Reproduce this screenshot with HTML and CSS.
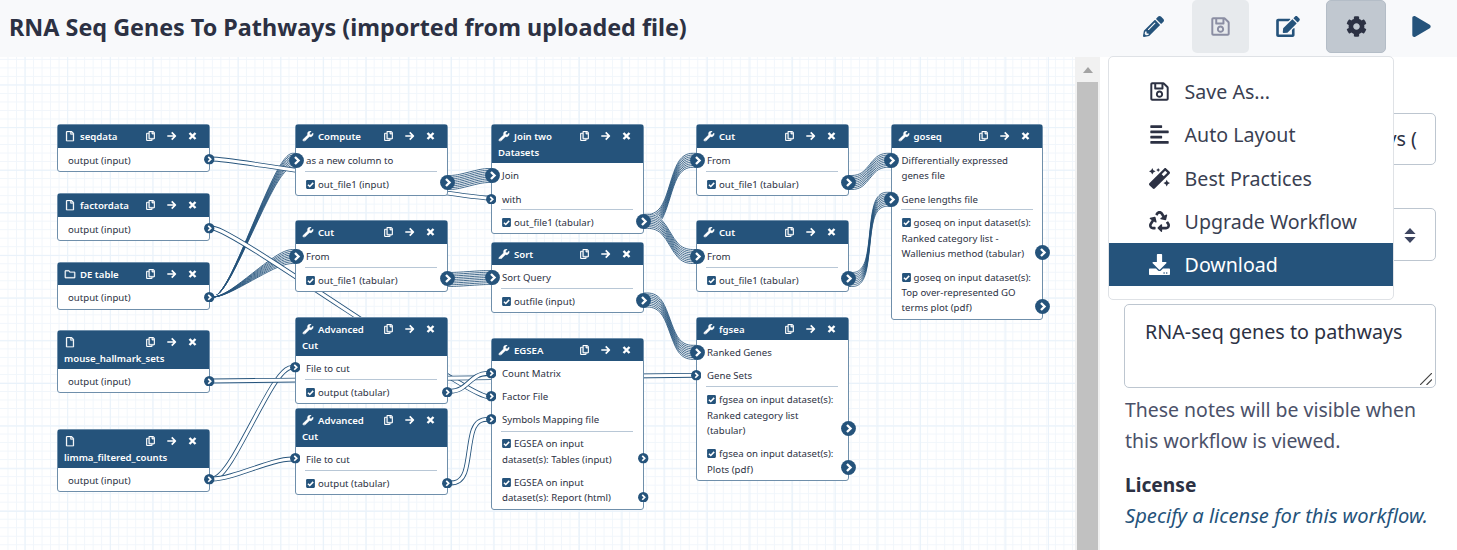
FILE: index.html
```html
<!DOCTYPE html>
<html lang="en">
<head>
<meta charset="utf-8">
<title>Workflow Editor</title>
<link rel="stylesheet" href="styles.css">
</head>
<body>
<svg class="sprite" aria-hidden="true">
  <symbol id="pencil" viewBox="0 0 512 512"><path d="M497.9 142.1l-46.1 46.1c-4.7 4.7-12.3 4.7-17 0l-111-111c-4.7-4.7-4.7-12.3 0-17l46.1-46.1c18.7-18.7 49.1-18.7 67.9 0l60.1 60.1c18.8 18.7 18.8 49.1 0 67.9zM284.2 99.8L21.6 362.4.4 483.9c-2.9 16.4 11.4 30.6 27.8 27.8l121.5-21.3 262.6-262.6c4.7-4.7 4.7-12.3 0-17l-111-111c-4.8-4.7-12.4-4.7-17.1 0zM124.1 339.9c-5.5-5.5-5.5-14.3 0-19.8l154-154c5.5-5.5 14.3-5.5 19.8 0s5.5 14.3 0 19.8l-154 154c-5.5 5.5-14.3 5.5-19.8 0zM88 424h48v36.3l-64.5 11.3-31.1-31.1L51.7 376H88v48z"/></symbol>
  <symbol id="save" viewBox="0 0 448 512"><path d="M433.941 129.941l-83.882-83.882A48 48 0 0 0 316.118 32H48C21.49 32 0 53.49 0 80v352c0 26.51 21.49 48 48 48h352c26.51 0 48-21.49 48-48V163.882a48 48 0 0 0-14.059-33.941zM272 80v80H144V80h128zm122 352H54a6 6 0 0 1-6-6V86a6 6 0 0 1 6-6h42v104c0 13.255 10.745 24 24 24h176c13.255 0 24-10.745 24-24V83.882l78.243 78.243a6 6 0 0 1 1.757 4.243V426a6 6 0 0 1-6 6zM224 232c-48.523 0-88 39.477-88 88s39.477 88 88 88 88-39.477 88-88-39.477-88-88-88zm0 128c-22.056 0-40-17.944-40-40s17.944-40 40-40 40 17.944 40 40-17.944 40-40 40z"/></symbol>
  <symbol id="edit" viewBox="0 0 576 512"><path d="M402.6 83.2l90.2 90.2c3.8 3.8 3.8 10 0 13.8L274.4 405.6l-92.8 10.3c-12.4 1.4-22.9-9.1-21.5-21.5l10.3-92.8L388.8 83.2c3.8-3.8 10-3.8 13.8 0zm162-22.9l-48.8-48.8c-15.2-15.2-39.9-15.2-55.2 0l-35.4 35.4c-3.8 3.8-3.8 10 0 13.8l90.2 90.2c3.8 3.8 10 3.8 13.8 0l35.4-35.4c15.2-15.3 15.2-40 0-55.2zM384 346.2V448H64V128h229.8c3.2 0 6.2-1.3 8.5-3.5l40-40c7.6-7.6 2.2-20.5-8.5-20.5H48C21.5 64 0 85.5 0 112v352c0 26.5 21.5 48 48 48h352c26.5 0 48-21.5 48-48V306.2c0-10.7-12.9-16-20.5-8.5l-40 40c-2.2 2.3-3.5 5.3-3.5 8.5z"/></symbol>
  <symbol id="cog" viewBox="0 0 512 512"><path d="M487.4 315.7l-42.6-24.6c4.3-23.2 4.3-47 0-70.2l42.6-24.6c4.9-2.8 7.1-8.6 5.5-14-11.1-35.6-30-67.8-54.7-94.6-3.8-4.1-10-5.1-14.8-2.3L380.8 110c-17.9-15.4-38.5-27.3-60.8-35.1V25.8c0-5.6-3.9-10.5-9.4-11.7-36.7-8.2-74.3-7.8-109.2 0-5.5 1.2-9.4 6.1-9.4 11.7V75c-22.2 7.9-42.8 19.8-60.8 35.1L88.7 85.5c-4.9-2.8-11-1.9-14.8 2.3-24.7 26.7-43.6 58.9-54.7 94.6-1.7 5.4.6 11.2 5.5 14L67.3 221c-4.3 23.2-4.3 47 0 70.2l-42.6 24.6c-4.9 2.8-7.1 8.6-5.5 14 11.1 35.6 30 67.8 54.7 94.6 3.8 4.1 10 5.1 14.8 2.3l42.6-24.6c17.9 15.4 38.5 27.3 60.8 35.1v49.2c0 5.6 3.9 10.5 9.4 11.7 36.7 8.2 74.3 7.8 109.2 0 5.5-1.2 9.4-6.1 9.4-11.7v-49.2c22.2-7.9 42.8-19.8 60.8-35.1l42.6 24.6c4.9 2.8 11 1.9 14.8-2.3 24.7-26.7 43.6-58.9 54.7-94.6 1.5-5.5-.7-11.3-5.6-14.1zM256 336c-44.1 0-80-35.9-80-80s35.9-80 80-80 80 35.9 80 80-35.9 80-80 80z"/></symbol>
  <symbol id="play" viewBox="0 0 448 512"><path d="M424.4 214.7L72.4 6.6C43.8-10.3 0 6.1 0 47.9V464c0 37.5 40.7 60.1 72.4 41.3l352-208c31.4-18.5 31.5-64.1 0-82.6z"/></symbol>
  <symbol id="align" viewBox="0 0 448 512"><path d="M12 32h264a12 12 0 0 1 12 12v40a12 12 0 0 1-12 12H12A12 12 0 0 1 0 84V44a12 12 0 0 1 12-12zM12 160h424a12 12 0 0 1 12 12v40a12 12 0 0 1-12 12H12a12 12 0 0 1-12-12v-40a12 12 0 0 1 12-12zM12 288h264a12 12 0 0 1 12 12v40a12 12 0 0 1-12 12H12a12 12 0 0 1-12-12v-40a12 12 0 0 1 12-12zM12 416h424a12 12 0 0 1 12 12v40a12 12 0 0 1-12 12H12a12 12 0 0 1-12-12v-40a12 12 0 0 1 12-12z"/></symbol>
  <symbol id="magic" viewBox="0 0 512 512"><path d="M224 96l16-32 32-16-32-16-16-32-16 32-32 16 32 16 16 32zM80 160l26.66-53.33L160 80l-53.34-26.67L80 0 53.34 53.33 0 80l53.34 26.67L80 160zm352 128l-26.66 53.33L352 368l53.34 26.67L432 448l26.66-53.33L512 368l-53.34-26.67L432 288zm70.62-193.77L417.77 9.38C411.53 3.12 403.34 0 395.15 0c-8.19 0-16.38 3.12-22.63 9.38L9.38 372.52c-12.5 12.5-12.5 32.76 0 45.25l84.85 84.85c6.25 6.25 14.44 9.37 22.62 9.37 8.19 0 16.38-3.12 22.63-9.37l363.14-363.15c12.5-12.48 12.5-32.75 0-45.24zM359.45 203.46l-50.91-50.91 86.6-86.6 50.91 50.91-86.6 86.6z"/></symbol>
  <symbol id="recycle" viewBox="0 0 512 512"><path d="M184.561 261.903c3.232 13.997-12.123 24.635-24.068 17.168l-40.736-25.455-50.867 81.402C55.606 356.273 70.96 384 96.012 384H148c6.627 0 12 5.373 12 12v40c0 6.627-5.373 12-12 12H96.115c-75.334 0-121.302-83.048-81.408-146.88l50.822-81.388-40.725-25.448c-12.081-7.547-8.966-25.961 4.879-29.158l110.237-25.45c8.611-1.988 17.201 3.381 19.189 11.99l25.452 110.237zm98.561-182.915l41.289 66.076-40.74 25.457c-12.051 7.528-9 25.953 4.879 29.158l110.237 25.45c8.672 1.999 17.215-3.438 19.189-11.99l25.45-110.237c3.197-13.844-11.99-24.719-24.068-17.168l-40.687 25.424-41.263-66.082c-37.521-60.033-125.209-60.171-162.816 0l-17.963 28.766c-3.51 5.62-1.8 13.021 3.82 16.533l33.919 21.195c5.62 3.512 13.024 1.803 16.536-3.817l17.961-28.743c12.712-20.341 41.973-19.676 54.257-.022zM497.288 301.12l-27.515-44.065c-3.511-5.623-10.916-7.334-16.538-3.821l-33.861 21.159c-5.62 3.512-7.33 10.915-3.818 16.536l27.564 44.112c13.257 21.211-2.057 48.96-27.136 48.96H320V336.02c0-14.213-17.242-21.383-27.313-11.313l-80 79.981c-6.249 6.248-6.249 16.379 0 22.627l80 79.989C302.689 517.308 320 510.3 320 495.989V448h95.88c75.274 0 121.335-82.997 81.408-146.88z"/></symbol>
  <symbol id="download" viewBox="0 0 512 512"><path d="M216 0h80c13.3 0 24 10.7 24 24v168h87.7c17.8 0 26.7 21.5 14.1 34.1L269.7 378.3c-7.5 7.5-19.8 7.5-27.3 0L90.1 226.1c-12.6-12.6-3.7-34.1 14.1-34.1H192V24c0-13.3 10.7-24 24-24zm296 376v112c0 13.3-10.7 24-24 24H24c-13.3 0-24-10.7-24-24V376c0-13.3 10.7-24 24-24h146.7l49 49c20.1 20.1 52.5 20.1 72.6 0l49-49H488c13.3 0 24 10.7 24 24zm-124 88c0-11-9-20-20-20s-20 9-20 20 9 20 20 20 20-9 20-20zm64 0c0-11-9-20-20-20s-20 9-20 20 9 20 20 20 20-9 20-20z"/></symbol>
  <symbol id="wrench" viewBox="0 0 512 512"><path d="M507.73 109.1c-2.24-9.03-13.54-12.09-20.12-5.51l-74.36 74.36-67.88-11.31-11.31-67.88 74.36-74.36c6.62-6.62 3.43-17.9-5.66-20.16-47.38-11.74-99.55.91-136.58 37.93-39.64 39.64-50.55 97.1-34.05 147.2L18.74 402.76c-24.99 24.99-24.99 65.51 0 90.5 24.99 24.99 65.51 24.99 90.5 0l213.21-213.21c50.12 16.71 107.47 5.68 147.37-34.22 37.07-37.07 49.7-89.32 37.91-136.73zM64 472c-13.25 0-24-10.75-24-24 0-13.26 10.75-24 24-24s24 10.74 24 24c0 13.25-10.75 24-24 24z"/></symbol>
  <symbol id="file" viewBox="0 0 384 512"><path d="M369.9 97.9L286 14C277 5 264.8-.1 252.1-.1H48C21.5 0 0 21.5 0 48v416c0 26.5 21.5 48 48 48h288c26.5 0 48-21.5 48-48V131.9c0-12.7-5.1-25-14.1-34zM332.1 128H256V51.9l76.1 76.1zM48 464V48h160v104c0 13.3 10.7 24 24 24h104v288H48z"/></symbol>
  <symbol id="folder" viewBox="0 0 512 512"><path d="M464 128H272l-54.63-54.63c-6-6-14.14-9.37-22.63-9.37H48C21.49 64 0 85.49 0 112v288c0 26.51 21.49 48 48 48h416c26.51 0 48-21.49 48-48V176c0-26.51-21.49-48-48-48zm0 272H48V112h140.12l54.63 54.63c6 6 14.14 9.37 22.63 9.37H464v224z"/></symbol>
  <symbol id="copy" viewBox="0 0 448 512"><path d="M433.941 65.941l-51.882-51.882A48 48 0 0 0 348.118 0H176c-26.51 0-48 21.49-48 48v48H48c-26.51 0-48 21.49-48 48v320c0 26.51 21.49 48 48 48h224c26.51 0 48-21.49 48-48v-48h80c26.51 0 48-21.49 48-48V99.882a48 48 0 0 0-14.059-33.941zM266 464H54a6 6 0 0 1-6-6V150a6 6 0 0 1 6-6h74v224c0 26.51 21.49 48 48 48h96v42a6 6 0 0 1-6 6zm128-96H182a6 6 0 0 1-6-6V54a6 6 0 0 1 6-6h106v88c0 13.255 10.745 24 24 24h88v202a6 6 0 0 1-6 6zm6-256h-64V48h9.632c1.591 0 3.117.632 4.243 1.757l48.368 48.368a6 6 0 0 1 1.757 4.243V112z"/></symbol>
  <symbol id="arrow" viewBox="0 0 10 10"><path class="line" d="M.8 5h7.6M5.2 1.4 8.8 5 5.2 8.6"/></symbol>
  <symbol id="close" viewBox="0 0 10 10"><path class="line thick" d="M2 2l6 6M8 2 2 8"/></symbol>
  <symbol id="check" viewBox="0 0 10 10"><rect class="blue" x=".1" y=".1" width="9.8" height="9.8" rx="1.2"/><path class="line" d="M2.2 5.2 4.2 7.2 8 3.2"/></symbol>
  <symbol id="port" viewBox="0 0 16 16"><circle class="blue" cx="8" cy="8" r="7.9"/><path class="line chevron" d="M6.4 4.3 10.2 8l-3.8 3.7"/></symbol>
  <symbol id="tools" viewBox="0 0 56 12">
    <use href="#copy" x="2" y="1" width="9" height="10" stroke="#fff" stroke-width="16"/>
    <use href="#arrow" x="22.5" y="1" width="10" height="10"/>
    <use href="#close" x="43.5" y="1" width="10" height="10"/>
  </symbol>
</svg>

<header class="topbar">
  <h1 class="title">RNA Seq Genes To Pathways (imported from uploaded file)</h1>
  <nav class="actions">
    <span class="action"><svg class="ico"><use href="#pencil"/></svg></span>
    <span class="action disabled"><svg class="ico"><use href="#save"/></svg></span>
    <span class="action"><svg class="ico wide"><use href="#edit"/></svg></span>
    <span class="action pressed"><svg class="ico"><use href="#cog"/></svg></span>
    <span class="action run"><svg class="ico"><use href="#play"/></svg></span>
  </nav>
</header>

<main class="editor">
  <section class="canvas">
    <svg class="wires" id="wires" viewBox="0 57 1075 493"></svg>

    <article class="node" style="left:57px;top:67.3px">
      <h2 class="head"><svg class="tools"><use href="#tools"/></svg><svg class="kind"><use href="#file"/></svg>seqdata</h2>
      <div class="body data"><p class="row out small">output (input)<svg class="port"><use href="#port"/></svg></p></div>
    </article>
    <article class="node" style="left:57px;top:136.3px">
      <h2 class="head"><svg class="tools"><use href="#tools"/></svg><svg class="kind"><use href="#file"/></svg>factordata</h2>
      <div class="body data"><p class="row out small">output (input)<svg class="port"><use href="#port"/></svg></p></div>
    </article>
    <article class="node" style="left:57px;top:205px">
      <h2 class="head"><svg class="tools"><use href="#tools"/></svg><svg class="kind"><use href="#folder"/></svg>DE table</h2>
      <div class="body data"><p class="row out small">output (input)<svg class="port"><use href="#port"/></svg></p></div>
    </article>
    <article class="node" style="left:57px;top:273.3px">
      <h2 class="head"><svg class="tools"><use href="#tools"/></svg><svg class="kind"><use href="#file"/></svg><br>mouse_hallmark_sets</h2>
      <div class="body data"><p class="row out small">output (input)<svg class="port"><use href="#port"/></svg></p></div>
    </article>
    <article class="node" style="left:57px;top:372px">
      <h2 class="head"><svg class="tools"><use href="#tools"/></svg><svg class="kind"><use href="#file"/></svg><br>limma_filtered_counts</h2>
      <div class="body data"><p class="row out small">output (input)<svg class="port"><use href="#port"/></svg></p></div>
    </article>

    <article class="node" style="left:295px;top:67.3px">
      <h2 class="head"><svg class="tools"><use href="#tools"/></svg><svg class="kind"><use href="#wrench"/></svg>Compute</h2>
      <div class="body"><p class="row in">as a new column to<svg class="port"><use href="#port"/></svg></p><hr class="rule">
      <p class="row out"><svg class="check"><use href="#check"/></svg>out_file1 (input)<svg class="port"><use href="#port"/></svg></p></div>
    </article>
    <article class="node" style="left:295px;top:163.3px">
      <h2 class="head"><svg class="tools"><use href="#tools"/></svg><svg class="kind"><use href="#wrench"/></svg>Cut</h2>
      <div class="body"><p class="row in">From<svg class="port"><use href="#port"/></svg></p><hr class="rule">
      <p class="row out"><svg class="check"><use href="#check"/></svg>out_file1 (tabular)<svg class="port"><use href="#port"/></svg></p></div>
    </article>
    <article class="node" style="left:295px;top:260px">
      <h2 class="head"><svg class="tools"><use href="#tools"/></svg><svg class="kind"><use href="#wrench"/></svg>Advanced<br>Cut</h2>
      <div class="body"><p class="row in small">File to cut<svg class="port"><use href="#port"/></svg></p><hr class="rule">
      <p class="row out small"><svg class="check"><use href="#check"/></svg>output (tabular)<svg class="port"><use href="#port"/></svg></p></div>
    </article>
    <article class="node" style="left:295px;top:351px">
      <h2 class="head"><svg class="tools"><use href="#tools"/></svg><svg class="kind"><use href="#wrench"/></svg>Advanced<br>Cut</h2>
      <div class="body"><p class="row in small">File to cut<svg class="port"><use href="#port"/></svg></p><hr class="rule">
      <p class="row out small"><svg class="check"><use href="#check"/></svg>output (tabular)<svg class="port"><use href="#port"/></svg></p></div>
    </article>

    <article class="node" style="left:491px;top:67.3px">
      <h2 class="head"><svg class="tools"><use href="#tools"/></svg><svg class="kind"><use href="#wrench"/></svg>Join two<br>Datasets</h2>
      <div class="body"><p class="row in">Join<svg class="port"><use href="#port"/></svg></p><p class="row in small lag">with<svg class="port"><use href="#port"/></svg></p><hr class="rule">
      <p class="row out"><svg class="check"><use href="#check"/></svg>out_file1 (tabular)<svg class="port"><use href="#port"/></svg></p></div>
    </article>
    <article class="node" style="left:491px;top:184.7px">
      <h2 class="head"><svg class="tools"><use href="#tools"/></svg><svg class="kind"><use href="#wrench"/></svg>Sort</h2>
      <div class="body"><p class="row in">Sort Query<svg class="port"><use href="#port"/></svg></p><hr class="rule">
      <p class="row out"><svg class="check"><use href="#check"/></svg>outfile (input)<svg class="port"><use href="#port"/></svg></p></div>
    </article>
    <article class="node" style="left:491px;top:281px">
      <h2 class="head"><svg class="tools"><use href="#tools"/></svg><svg class="kind"><use href="#wrench"/></svg>EGSEA</h2>
      <div class="body tight"><p class="row in small">Count Matrix<svg class="port"><use href="#port"/></svg></p><p class="row in small">Factor File<svg class="port"><use href="#port"/></svg></p><p class="row in small">Symbols Mapping file<svg class="port"><use href="#port"/></svg></p><hr class="rule">
      <p class="row out small"><svg class="check"><use href="#check"/></svg>EGSEA on input<br>dataset(s): Tables (input)<svg class="port"><use href="#port"/></svg></p>
      <p class="row out small"><svg class="check"><use href="#check"/></svg>EGSEA on input<br>dataset(s): Report (html)<svg class="port"><use href="#port"/></svg></p></div>
    </article>

    <article class="node" style="left:696px;top:67.3px">
      <h2 class="head"><svg class="tools"><use href="#tools"/></svg><svg class="kind"><use href="#wrench"/></svg>Cut</h2>
      <div class="body"><p class="row in">From<svg class="port"><use href="#port"/></svg></p><hr class="rule">
      <p class="row out"><svg class="check"><use href="#check"/></svg>out_file1 (tabular)<svg class="port"><use href="#port"/></svg></p></div>
    </article>
    <article class="node" style="left:696px;top:163.3px">
      <h2 class="head"><svg class="tools"><use href="#tools"/></svg><svg class="kind"><use href="#wrench"/></svg>Cut</h2>
      <div class="body"><p class="row in">From<svg class="port"><use href="#port"/></svg></p><hr class="rule">
      <p class="row out"><svg class="check"><use href="#check"/></svg>out_file1 (tabular)<svg class="port"><use href="#port"/></svg></p></div>
    </article>
    <article class="node" style="left:696px;top:260px">
      <h2 class="head"><svg class="tools"><use href="#tools"/></svg><svg class="kind"><use href="#wrench"/></svg>fgsea</h2>
      <div class="body tight"><p class="row in">Ranked Genes<svg class="port"><use href="#port"/></svg></p><p class="row in small">Gene Sets<svg class="port"><use href="#port"/></svg></p><hr class="rule">
      <p class="row out"><svg class="check"><use href="#check"/></svg>fgsea on input dataset(s):<br>Ranked category list<br>(tabular)<svg class="port"><use href="#port"/></svg></p>
      <p class="row out"><svg class="check"><use href="#check"/></svg>fgsea on input dataset(s):<br>Plots (pdf)<svg class="port"><use href="#port"/></svg></p></div>
    </article>

    <article class="node" style="left:890.5px;top:67.3px">
      <h2 class="head"><svg class="tools"><use href="#tools"/></svg><svg class="kind"><use href="#wrench"/></svg>goseq</h2>
      <div class="body"><p class="row in first">Differentially expressed<br>genes file<svg class="port"><use href="#port"/></svg></p><p class="row in lag">Gene lengths file<svg class="port"><use href="#port"/></svg></p><hr class="rule">
      <p class="row out"><svg class="check"><use href="#check"/></svg>goseq on input dataset(s):<br>Ranked category list -<br>Wallenius method (tabular)<svg class="port"><use href="#port"/></svg></p>
      <p class="row out"><svg class="check"><use href="#check"/></svg>goseq on input dataset(s):<br>Top over-represented GO<br>terms plot (pdf)<svg class="port"><use href="#port"/></svg></p></div>
    </article>
  </section>

  <div class="scrollbar"><span class="scroll-up"></span><span class="thumb"></span></div>

  <aside class="panel">
    <div class="field name">ys (</div>
    <div class="field select"><svg class="sorter" viewBox="0 0 12 15"><path d="M6 0l5.6 6H.4zM6 15l5.6-6H.4z"/></svg></div>
    <div class="field notes">RNA-seq genes to pathways<svg class="grip" viewBox="0 0 12 12"><path d="M0 12 12 0M6.5 12 12 6.5"/></svg></div>
    <p class="help">These notes will be visible when<br>this workflow is viewed.</p>
    <h3 class="label">License</h3>
    <a class="license">Specify a license for this workflow.</a>
  </aside>
</main>

<ul class="menu">
  <li class="item"><svg class="ico"><use href="#save"/></svg><span>Save As...</span></li>
  <li class="item"><svg class="ico"><use href="#align"/></svg><span>Auto Layout</span></li>
  <li class="item"><svg class="ico"><use href="#magic"/></svg><span>Best Practices</span></li>
  <li class="item"><svg class="ico"><use href="#recycle"/></svg><span>Upgrade Workflow</span></li>
  <li class="item active"><svg class="ico"><use href="#download"/></svg><span>Download</span></li>
</ul>
<script src="wires.js"></script>
</body>
</html>
```
FILE: styles.css
```css
* { box-sizing: border-box; }
body {
  margin: 0;
  width: 1457px;
  height: 550px;
  overflow: hidden;
  position: relative;
  background: #fff;
  color: #2c3143;
  font-family: "Noto Sans", sans-serif;
}
h1, h2, h3, p, ul { margin: 0; padding: 0; }
.sprite { position: absolute; width: 0; height: 0; }
.line { fill: none; stroke: #fff; stroke-width: 1.7; }
.thick { stroke-width: 2.4; }
.chevron { stroke-width: 2.5; }
.blue { fill: #25537b; }

.topbar {
  display: flex;
  justify-content: space-between;
  height: 57px;
  padding-left: 9px;
  background: #f8f9fb;
}
.title {
  font-size: 23.35px;
  line-height: 55px;
  font-weight: 700;
  white-space: nowrap;
}
.actions { display: flex; gap: 10px; padding-right: 10px; }
.action {
  display: flex;
  align-items: center;
  justify-content: center;
  width: 57px;
  height: 53px;
  border-radius: 5px;
  color: #25537b;
}
.disabled { background: #e7eaed; color: #8b8ea3; }
.pressed { width: 60px; background: #c1c8d0; border: 1px solid #b4bdc7; color: #2c3143; }
.run { width: 51px; }
.ico { width: 21px; height: 21px; fill: currentColor; }
.wide { width: 24px; }

.editor { display: flex; height: 493px; }
.canvas {
  position: relative;
  width: 1075px;
  overflow: hidden;
  background-color: #fff;
  background-image:
    linear-gradient(90deg, #e9f2fa 1px, transparent 1px),
    linear-gradient(#e9f2fa 1px, transparent 1px),
    linear-gradient(90deg, #f1f6fb 1px, transparent 1px),
    linear-gradient(#f1f6fb 1px, transparent 1px);
  background-size: 42.65px 42.65px, 42.65px 42.65px, 8.53px 8.53px, 8.53px 8.53px;
  background-position: 24.6px 0, 0 27.5px, 7.5px 0, 0 1.9px;
}
.wires { position: absolute; inset: 0; width: 1075px; height: 493px; }
.tube { fill: none; stroke: #25537b; stroke-width: 4.8; }
.core { fill: none; stroke: #fff; stroke-width: 3.1; }
.strand { fill: none; stroke: #25537b; stroke-width: .85; }
.backing { fill: none; stroke: #fff; stroke-width: 2; }

.node {
  position: absolute;
  width: 152.5px;
  border: 1px solid #6f8fab;
  border-radius: 3px;
  background: #fff;
  font-size: 9.65px;
  line-height: 15.45px;
}
.head {
  padding: 4.2px 6px 2.6px;
  background: #25537b;
  color: #fff;
  font-size: 9.6px;
  line-height: 15.45px;
  font-weight: 600;
}
.tools { float: right; width: 56px; height: 12px; margin: 1px 3px 0 0; fill: #fff; }
.kind { width: 12px; height: 10.5px; fill: #fff; vertical-align: -1.5px; margin-right: 4px; stroke: #fff; stroke-width: 12; }
.body { display: flex; flex-direction: column; gap: 8px; padding: 5px 9px 2.6px; }
.tight { gap: 7.65px; padding-bottom: 3.4px; }
.data { padding-bottom: 3px; }
.row { position: relative; white-space: nowrap; padding-left: 1px; }
.lag { margin: .6px 0 -1.3px; }
.rule { width: 132px; height: 1px; margin: -5px 0 -3px; border: 0; background: #b8c7d6; }
.check { width: 9px; height: 9px; margin-right: 3px; vertical-align: -1px; }
.port { position: absolute; width: 15px; height: 15px; }
.in .port { left: -16.5px; top: 0; }
.out .port { right: -17px; bottom: 2px; }
.small .port { width: 10.6px; height: 10.6px; }
.in.small .port { left: -15.5px; top: 1.7px; }
.out.small .port { right: -15.3px; bottom: 3.3px; }

.scrollbar {
  display: flex;
  flex-direction: column;
  align-items: center;
  width: 25px;
  background: #f1f1f1;
}
.scroll-up {
  margin: 10px 0 9px;
  border: 5.5px solid transparent;
  border-top: 0;
  border-bottom: 6px solid #a3a3a3;
}
.thumb { width: 21px; flex: 1; background: #c1c1c1; }

.panel {
  flex: 1;
  padding: 56px 21px 0 24px;
  font-size: 19.7px;
}
.field { position: relative; border: 1px solid #bdc6d0; border-radius: 5px; }
.name { height: 52px; line-height: 50px; text-align: right; padding-right: 18px; }
.select { height: 53px; margin-top: 43px; }
.sorter { position: absolute; right: 19px; top: 19px; width: 12px; height: 15px; fill: #3d4560; }
.notes { height: 84px; margin-top: 43px; padding: 11px 19px 11px 20px; line-height: 32px; white-space: nowrap; }
.grip { position: absolute; right: 3px; bottom: 2px; width: 12px; height: 12px; fill: none; stroke: #444; stroke-width: 1.2; }
.help { margin-top: 7.4px; padding-left: 1px; font-size: 19.45px; line-height: 30.6px; color: #4b5169; white-space: nowrap; }
.label { margin-top: 13px; padding-left: 1px; font-size: 19.2px; line-height: 30.6px; }
.license { display: block; padding-left: 1px; font-size: 20.15px; line-height: 30.6px; font-style: italic; color: #25537b; white-space: nowrap; }

.menu {
  position: absolute;
  left: 1108px;
  top: 56px;
  width: 286px;
  height: 243.5px;
  padding-top: 13px;
  border: 1.5px solid #dfe2e6;
  border-radius: 5px;
  background: #fff;
  list-style: none;
  font-size: 19.6px;
}
.item { display: flex; align-items: center; gap: 15px; height: 43.3px; padding-left: 39.6px; color: #3a3f52; }
.item .ico { color: #2c3143; }
.active, .active .ico { background: #25537b; color: #fff; }
```
FILE: wires.js
```js
const svg = document.getElementById("wires");

// Uniform B-spline through a start point, two horizontal leads and an end point.
function curve(x1, y1, x2, y2, dy = Math.abs(y2 - y1)) {
  const lead = x2 - x1 < 60 ? Math.min(21, 8 + dy / 3) : 15.7;
  const p = [[x1, y1], [x1 + lead, y1], [x2 - lead, y2], [x2, y2]];
  const mix = (...w) => [0, 1].map(k => w.reduce((s, v, i) => s + v * p[i][k], 0).toFixed(2)).join(" ");
  const t = 1 / 3, u = 2 / 3, s = 1 / 6;
  return `M${mix(1, 0, 0, 0)}L${mix(5 * s, s, 0, 0)}` +
    `C${mix(u, t, 0, 0)} ${mix(t, u, 0, 0)} ${mix(s, 4 * s, s, 0)}` +
    `C${mix(0, u, t, 0)} ${mix(0, t, u, 0)} ${mix(0, s, 4 * s, s)}` +
    `C${mix(0, 0, u, t)} ${mix(0, 0, t, u)} ${mix(0, 0, s, 5 * s)}L${mix(0, 0, 0, 1)}`;
}
function add(cls, d) {
  const path = document.createElementNS("http://www.w3.org/2000/svg", "path");
  path.setAttribute("class", cls);
  path.setAttribute("d", d);
  svg.appendChild(path);
}
function single(x1, y1, x2, y2) {
  const d = curve(x1, y1, x2, y2);
  add("tube", d);
  add("core", d);
}
// A bundle of strands; spread is 0 where all strands share one small port.
function bundle(x1, y1, x2, y2, spread = 1) {
  for (const cls of ["backing", "strand"])
    for (let o = -7; o <= 7; o += 1.75) add(cls, curve(x1, y1 + o * spread, x2, y2 + o));
}
bundle(209, 297, 296, 160.3, 0);
bundle(209, 297, 296, 256.5, 0);
bundle(447, 182.5, 491.5, 175.5);
bundle(447, 279.5, 491.5, 277.5);
bundle(643, 221.3, 697, 160.3);
bundle(643, 221.3, 697, 256.5);
bundle(643, 300, 697, 352.3);
bundle(848, 182.5, 891.5, 160.3);
bundle(848, 279.5, 891.5, 199.3);
single(209, 159, 491, 198);
single(209, 228, 491, 396.7);
single(209, 479, 295, 367.3);
single(209, 479, 295, 459);
single(209, 381, 697, 375.3);
single(447, 391.3, 491, 373.3);
single(447, 483, 491, 419.3);
```
